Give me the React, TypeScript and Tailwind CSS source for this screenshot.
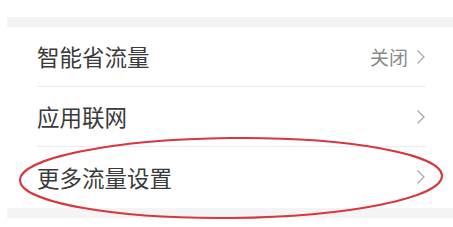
const rows = [
  { label: "智能省流量", value: "关闭" },
  { label: "应用联网", value: "" },
  { label: "更多流量设置", value: "" },
];

function Chevron() {
  return (
    <svg width="10" height="16" viewBox="0 0 10 16" className="text-[#a8a8a8]">
      <path d="M1.5 1.5 L8 8 L1.5 14.5" fill="none" stroke="currentColor" strokeWidth="1.3" />
    </svg>
  );
}

export default function App() {
  return (
    <div
      className="relative h-[227px] w-[453px] overflow-hidden bg-white"
      style={{ fontFamily: '"Noto Sans CJK SC", "Noto Sans", sans-serif' }}
    >
      <div className="h-[17px]" />
      <div className="ml-[7px] h-[10px] bg-[#f4f4f4]" />
      <div className="pl-[37px] pr-[27px]">
        {rows.map((row, i) => (
          <div
            key={row.label}
            className={
              "flex h-[60px] items-center justify-between " +
              (i < rows.length - 1 ? "border-b border-[#ececec]" : "")
            }
          >
            <span className="text-[22.5px] leading-none text-[#3a3a3a]">{row.label}</span>
            <span className="flex items-center gap-[8px] text-[19px] leading-none text-[#8a8a8a]">
              {row.value && <span>{row.value}</span>}
              <Chevron />
            </span>
          </div>
        ))}
      </div>
      <div className="ml-[7px] mt-[1px] h-[10px] bg-[#f4f4f4]" />

      <svg className="absolute left-0 top-0" width="453" height="227" viewBox="0 0 453 227">
        <ellipse
          cx="231"
          cy="178"
          rx="211"
          ry="40"
          fill="none"
          stroke="#d9363e"
          strokeWidth="2"
          transform="rotate(-0.6 231 178)"
        />
      </svg>
    </div>
  );
}
